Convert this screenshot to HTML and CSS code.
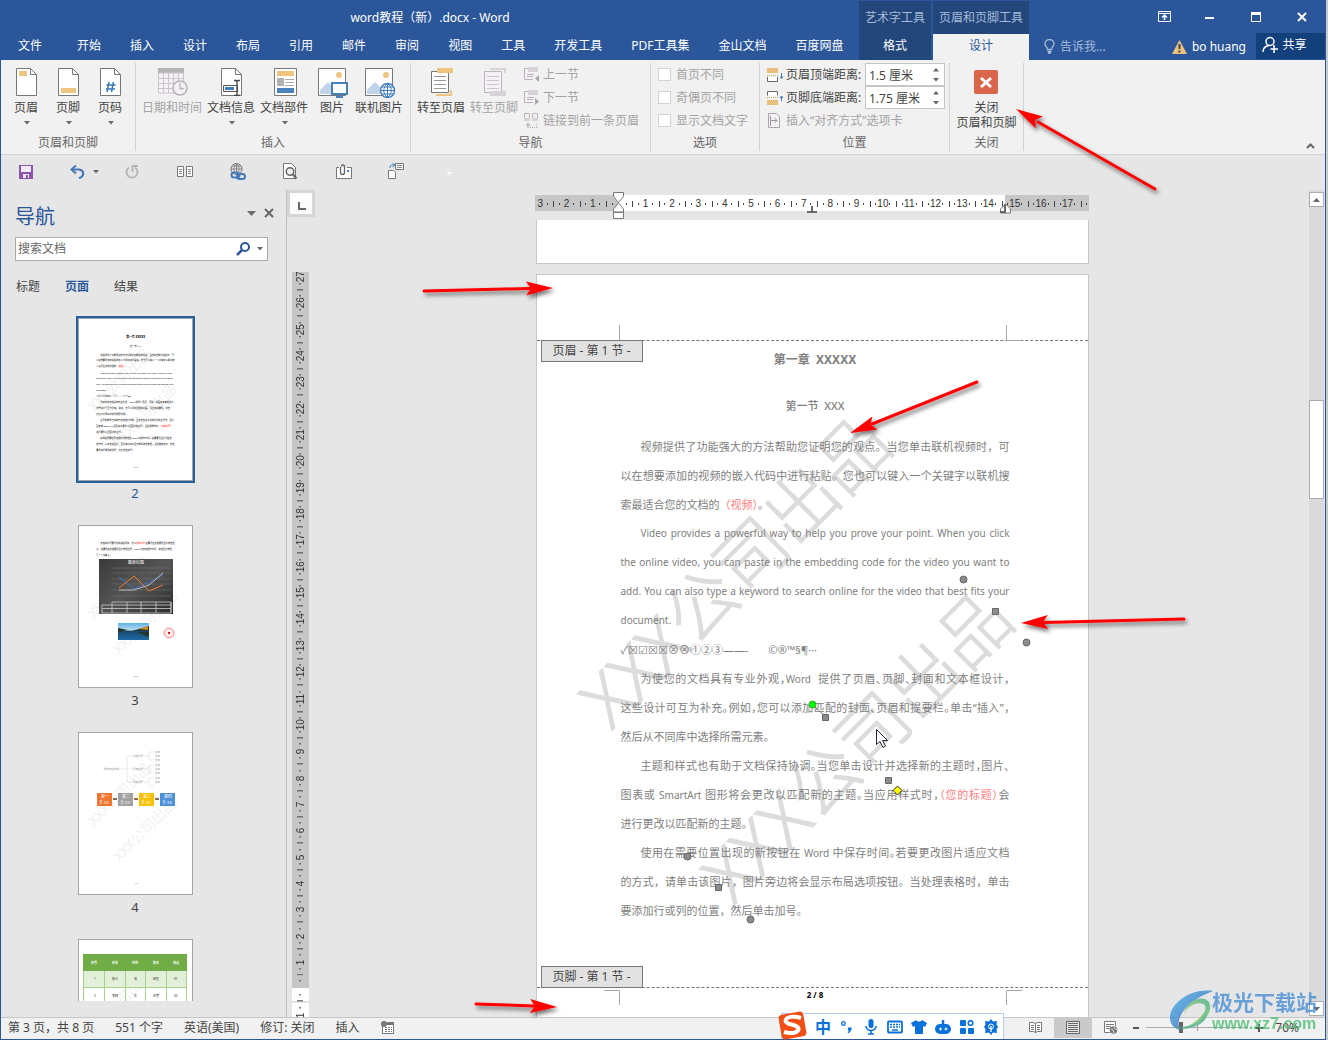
FILE: index.html
```html
<!DOCTYPE html>
<html lang="zh-CN">
<head>
<meta charset="utf-8">
<title>word教程（新）.docx - Word</title>
<link rel="stylesheet" href="styles.css">
</head>
<body>
<svg class="defs" width="0" height="0" aria-hidden="true">
  <defs>
    <symbol id="caret" viewBox="0 0 6 4"><path d="M0 0h6L3 3.500z" fill="#6a6a6a"/></symbol>
    <g id="arrowhead"><path d="M0 0L-27 -7L-22 0L-27 7z" fill="#f00"/></g>
    <linearGradient id="swirl" x1="0" y1="0" x2="1" y2="1"><stop offset="0" stop-color="#49b6ee"/><stop offset=".6" stop-color="#3a7cc6"/><stop offset="1" stop-color="#2f6bb8"/></linearGradient>
    <linearGradient id="leaf" x1="1" y1="0" x2="0" y2="1"><stop offset="0" stop-color="#45b08c"/><stop offset="1" stop-color="#b4d84a"/></linearGradient>
    <linearGradient id="dark" x1="0" y1="0" x2="1" y2="1"><stop offset="0" stop-color="#3a3a3a"/><stop offset=".5" stop-color="#555"/><stop offset="1" stop-color="#2c2c2c"/></linearGradient>
    <linearGradient id="lake" x1="0" y1="0" x2="0" y2="1"><stop offset="0" stop-color="#5bb2e8"/><stop offset=".4" stop-color="#bcd9ea"/><stop offset=".5" stop-color="#1c4a6e"/><stop offset="1" stop-color="#1a6aa8"/></linearGradient>
    <filter id="shadow" x="-20%" y="-50%" width="150%" height="220%"><feDropShadow dx="2" dy="3" stdDeviation="2" flood-color="#000" flood-opacity=".55"/></filter>
    <g id="thumb-mark" class="thumb-mark"><text transform="translate(197 295) rotate(-45)">XXX公司出品</text><text transform="translate(319 470) rotate(-45)">XXX公司出品</text></g>
  </defs>
</svg>

<div class="app">
  <header class="titlebar">
    <div class="title-main">
      <div class="doc-title">word教程（新）.docx - Word</div>
      <nav class="tabs">
        <button class="tab tab-file">文件</button><button class="tab">开始</button><button class="tab">插入</button><button class="tab">设计</button><button class="tab">布局</button><button class="tab">引用</button><button class="tab">邮件</button><button class="tab">审阅</button><button class="tab">视图</button><button class="tab">工具</button><button class="tab">开发工具</button><button class="tab">PDF工具集</button><button class="tab">金山文档</button><button class="tab">百度网盘</button>
      </nav>
    </div>
    <div class="context context-art"><div class="context-name">艺术字工具</div><button class="tab">格式</button></div>
    <div class="context context-hf"><div class="context-name">页眉和页脚工具</div><button class="tab tab-active">设计</button></div>
    <div class="title-side">
      <div class="window-buttons">
        <button aria-label="功能区显示选项"><svg width="13" height="11"><path d="M.5 .5h12v10H.5zM.5 2.500h12" fill="none" stroke="#fff"/><path d="M6.500 9V5M4 6.500L6.500 4L9 6.500" fill="none" stroke="#fff" stroke-width="1.500"/></svg></button>
        <button aria-label="最小化"><svg width="10" height="11"><path d="M0 6h9v2H0z" fill="#fff"/></svg></button>
        <button aria-label="最大化"><svg width="10" height="10"><path d="M.5 1.500h9v8h-9z" fill="none" stroke="#fff"/><path d="M0 0h10v3H0z" fill="#fff"/></svg></button>
        <button aria-label="关闭"><svg width="10" height="10"><path d="M1 1l8 8M9 1L1 9" stroke="#fff" stroke-width="2"/></svg></button>
      </div>
      <div class="account-row">
        <button class="tell-me"><svg width="11" height="15"><path d="M3.500 10.500C3.500 8 1 7.500 1 4.800a4.500 4.300 0 0 1 9 0C10 7.500 7.500 8 7.500 10.500zM3.500 12.500h4M4 14h3" fill="none" stroke="#a5bad9" stroke-width="1.300"/></svg><span>告诉我...</span></button>
        <button class="user"><svg width="15" height="14"><path d="M7.500 0L15 14H0z" fill="#eac282"/><path d="M6.500 4h2v5h-2zM6.500 10.500h2v2h-2z" fill="#444"/></svg><span>bo huang</span></button>
        <button class="share"><svg width="16" height="17"><circle cx="8" cy="5.500" r="4" fill="none" stroke="#fff" stroke-width="1.500"/><path d="M1 16c0-4 3-6 6-6.500M12 9v8M8.500 13H16" fill="none" stroke="#fff" stroke-width="1.500"/></svg><span>共享</span></button>
      </div>
    </div>
  </header>

  <section class="ribbon">
    <div class="group g-hf">
      <div class="group-body">
        <button class="big w42"><svg width="22" height="28"><path d="M.5 .5h14l6 6v21H.5z" fill="#fff" stroke="#777"/><path d="M14.500 .5v6h6" fill="none" stroke="#777"/><path d="M3 3h8v5H3z" fill="#edc57f"/></svg><span>页眉</span><svg class="caret"><use href="#caret"/></svg></button>
        <button class="big w42"><svg width="22" height="28"><path d="M.5 .5h14l6 6v21H.5z" fill="#fff" stroke="#777"/><path d="M14.500 .5v6h6" fill="none" stroke="#777"/><path d="M3 20h15v5H3z" fill="#edc57f"/></svg><span>页脚</span><svg class="caret"><use href="#caret"/></svg></button>
        <button class="big w42"><svg width="22" height="28"><path d="M.5 .5h14l6 6v21H.5z" fill="#fff" stroke="#777"/><path d="M14.500 .5v6h6" fill="none" stroke="#777"/><path d="M9 14l-2 10M13.500 14l-2 10M6.500 17h9M6 21h9" stroke="#3a78b8" stroke-width="1.500"/></svg><span>页码</span><svg class="caret"><use href="#caret"/></svg></button>
      </div>
      <div class="group-name">页眉和页脚</div>
    </div>
    <div class="group g-insert">
      <div class="group-body">
        <button class="big w60 off" disabled><svg width="30" height="28"><path d="M0 0h26v5H0z" fill="#b5b2b5"/><path d="M.5 5h25v20H.5z" fill="#f6f1f6" stroke="#cbc4cb"/><path d="M5.500 5v20M10.500 5v20M15.500 5v20M20.500 5v20M0 10.500h26M0 15.500h26M0 20.500h26" stroke="#cbc4cb"/><circle cx="22" cy="20" r="7" fill="#f6f1f6" stroke="#b5b2b5" stroke-width="1.500"/><path d="M22 15v5.500h4" fill="none" stroke="#b5b2b5" stroke-width="1.300"/></svg><span>日期和时间</span></button>
        <button class="big w58"><svg width="22" height="28"><path d="M.5 .5h14l6 6v21H.5z" fill="#fff" stroke="#777"/><path d="M14.500 .5v6h6" fill="none" stroke="#777"/><path d="M2.500 17.500h14v6h-14z" fill="#fff" stroke="#555"/><path d="M4 19h9v3H4z" fill="#3f7cbb"/><path d="M13 12.500h2l1 1 1-1h2M13 27.500h2l1-1 1 1h2M16 13v14" fill="none" stroke="#444" stroke-width="1.300"/></svg><span>文档信息</span><svg class="caret"><use href="#caret"/></svg></button>
        <button class="big w48"><svg width="23" height="28"><path d="M.5 .5h22v27H.5z" fill="#fff" stroke="#777"/><path d="M3 3h17v5H3z" fill="#edc57f"/><path d="M3 10h7v8H3z" fill="#b0b0b0"/><path d="M11 11.500h9M11 14.500h9M11 17.500h9" stroke="#aaa"/><path d="M3 20h17v5H3z" fill="#4a82bd"/></svg><span>文档部件</span><svg class="caret"><use href="#caret"/></svg></button>
        <button class="big w48"><svg width="30" height="30"><path d="M.5 .5h27v27H.5z" fill="#fff" stroke="#777"/><circle cx="21" cy="7" r="3" fill="#edc57f"/><path d="M2 26V22L10 14l8 8v4z" fill="#c0d3e9"/><path d="M14 15h15v11H14z" fill="#fff" stroke="#4a80b8" stroke-width="2"/><path d="M18 29h7M21.500 27v2" stroke="#4a80b8" stroke-width="2"/></svg><span>图片</span></button>
        <button class="big w46"><svg width="30" height="30"><path d="M.5 .5h27v27H.5z" fill="#fff" stroke="#777"/><circle cx="21" cy="7" r="3" fill="#edc57f"/><path d="M2 26V22L10 14l8 8v4z" fill="#c0d3e9"/><circle cx="22.500" cy="22.500" r="7" fill="#fff" stroke="#3f7cbb" stroke-width="1.400"/><path d="M22.500 15.500v14M15.500 22.500h14M16.500 19h12M16.500 26h12M22.500 15.500c-5 4-5 10 0 14M22.500 15.500c5 4 5 10 0 14" fill="none" stroke="#3f7cbb"/></svg><span>联机图片</span></button>
      </div>
      <div class="group-name">插入</div>
    </div>
    <div class="group g-nav">
      <div class="group-body">
        <button class="big w52"><svg width="22" height="28"><path d="M.5 3.500h17v21H.5z" fill="#fff" stroke="#777"/><path d="M6 0h16v5H6z" fill="#edc57f"/><path d="M3 8.500h12M3 12.500h12M3 16.500h12M3 20.500h12" stroke="#999"/><path d="M20 22v5H5" fill="none" stroke="#edc57f" stroke-width="2"/></svg><span>转至页眉</span></button>
        <button class="big w54 off" disabled><svg width="22" height="28"><path d="M.5 3.500h17v21H.5z" fill="#f6f1f6" stroke="#bbb4bb"/><path d="M6 1h15v4" fill="none" stroke="#d8d2d8" stroke-width="2"/><path d="M3 8.500h12M3 12.500h12M3 16.500h12M3 20.500h12" stroke="#cbc4cb"/><path d="M6 23h16v5H6z" fill="#d8d2d8"/></svg><span>转至页脚</span></button>
        <div class="rows">
          <button class="row off" disabled><svg width="16" height="16"><path d="M4 1.500H.5v11H9" fill="#f6f1f6" stroke="#b8b2b8"/><path d="M4 0h10v5H4z" fill="#d8d2d8"/><path d="M3 7.500h7M3 9.500h6" stroke="#b8b2b8"/><path d="M15 8v7l-4-3.500z" fill="#aaa5aa"/></svg><span>上一节</span></button>
          <button class="row off" disabled><svg width="16" height="16"><path d="M4 1.500H.5v11H9" fill="#f6f1f6" stroke="#b8b2b8"/><path d="M4 0h10v5H4z" fill="#d8d2d8"/><path d="M3 7.500h7M3 9.500h6" stroke="#b8b2b8"/><path d="M11 8v7l4-3.500z" fill="#aaa5aa"/></svg><span>下一节</span></button>
          <button class="row off" disabled><svg width="16" height="16"><path d="M.5 5V.5h5V5M8.500 5V.5h5V5" fill="none" stroke="#b8b2b8"/><path d="M0 5h6v3H0zM8 5h6v3H8z" fill="#d8d2d8"/><path d="M4 15v-4M2 12.500l2-2 2 2" fill="none" stroke="#999"/><path d="M6 14.500h7V10" fill="none" stroke="#aaa" stroke-dasharray="1 1"/></svg><span>链接到前一条页眉</span></button>
        </div>
      </div>
      <div class="group-name">导航</div>
    </div>
    <div class="group g-options">
      <div class="group-body rows">
        <label class="check"><input type="checkbox" disabled><span>首页不同</span></label>
        <label class="check"><input type="checkbox" disabled><span>奇偶页不同</span></label>
        <label class="check"><input type="checkbox" disabled><span>显示文档文字</span></label>
      </div>
      <div class="group-name">选项</div>
    </div>
    <div class="group g-position">
      <div class="group-body rows">
        <div class="measure"><svg width="17" height="14"><path d="M0 0h11v5H0z" fill="#e8c07c"/><path d="M0 7.500h11" stroke="#d0a860" stroke-dasharray="1 1"/><path d="M.5 9v4.500h10V9" fill="#fff" stroke="#666"/><path d="M14.500 5v5M13 8.500l1.500 2 1.500-2" fill="none" stroke="#3f7cbb"/></svg><label for="top-distance">页眉顶端距离:</label><span class="spin"><input id="top-distance" type="text" value="1.5 厘米"><svg width="6" height="14"><path d="M0 3.500h6L3 0zM0 10h6l-3 3.500z" fill="#666"/></svg></span></div>
        <div class="measure"><svg width="17" height="14"><path d="M.5 4.500V.5h10v4" fill="#fff" stroke="#666"/><path d="M0 6.500h11" stroke="#d0a860" stroke-dasharray="1 1"/><path d="M0 9h11v5H0z" fill="#e8c07c"/><path d="M14.500 10V5M13 7l1.500-2L16 7" fill="none" stroke="#3f7cbb"/></svg><label for="bottom-distance">页脚底端距离:</label><span class="spin"><input id="bottom-distance" type="text" value="1.75 厘米"><svg width="6" height="14"><path d="M0 3.500h6L3 0zM0 10h6l-3 3.500z" fill="#666"/></svg></span></div>
        <button class="row off" disabled><svg width="16" height="15"><path d="M1.500 .5h8l3 3v11h-11z" fill="#f6f1f6" stroke="#aaa5aa"/><path d="M3.500 3v10M4 7.500h6M7.500 5L10 7.500 7.500 10" fill="none" stroke="#999"/></svg><span>插入“对齐方式”选项卡</span></button>
      </div>
      <div class="group-name">位置</div>
    </div>
    <div class="group g-close">
      <div class="group-body">
        <button class="big close-hf"><svg width="24" height="24"><rect width="24" height="24" rx="2" fill="#d9654a"/><path d="M7 8l10 9M17 8L7 17" stroke="#fff" stroke-width="3"/></svg><span>关闭<br>页眉和页脚</span></button>
      </div>
      <div class="group-name">关闭</div>
    </div>
    <button class="collapse" aria-label="折叠功能区"><svg width="9" height="6"><path d="M1 5l3.500-3.500L8 5" fill="none" stroke="#666" stroke-width="2"/></svg></button>
  </section>

  <div class="quick">
    <button aria-label="保存"><svg width="14" height="14"><path d="M0 0h14v14H0z" fill="#8a56ab"/><path d="M2 1h10v6H2zM4 9h6v4H4z" fill="#f2eaf7"/><path d="M7 10h2v3H7z" fill="#8a56ab"/></svg></button>
    <button class="undo" aria-label="撤消"><svg width="15" height="14"><path d="M2 4.500h7c6 1 5 7.500 0 8.500" fill="none" stroke="#4379b8" stroke-width="2.200"/><path d="M6 .5L1.500 4.500 6 8.500" fill="none" stroke="#4379b8" stroke-width="2"/></svg><svg class="caret"><use href="#caret"/></svg></button>
    <button aria-label="恢复"><svg width="14" height="14"><path d="M4 2.500a5.500 5.500 0 1 0 6 0M7.500 7V1H13" fill="none" stroke="#b3b3b3" stroke-width="1.800"/></svg></button>
    <button aria-label="阅读视图"><svg width="16" height="12"><path d="M.5 .5h6v10h-6zM9.500 .5h6v10h-6z" fill="#fff" stroke="#777"/><path d="M2 3.500h3M2 5.500h3M2 7.500h3M11 3.500h3M11 5.500h3M11 7.500h3" stroke="#888"/></svg></button>
    <button aria-label="超链接"><svg width="16" height="17"><circle cx="6.500" cy="6" r="5.500" fill="none" stroke="#777"/><path d="M1 6h11M6.500 .5v11M2 3h9M6.500 .5c-3.500 3-3.500 8 0 11M6.500 .5c3.500 3 3.500 8 0 11" fill="none" stroke="#888"/><rect x="1.500" y="9.500" width="8" height="5" rx="2.500" fill="none" stroke="#4379b8" stroke-width="2"/><rect x="7" y="11" width="8" height="5" rx="2.500" fill="none" stroke="#4379b8" stroke-width="2"/></svg></button>
    <button aria-label="打印预览"><svg width="15" height="17"><path d="M.5 .5h8l4 4v11H.5z" fill="#fff" stroke="#777"/><circle cx="7" cy="8.500" r="3.800" fill="#eee" stroke="#666" stroke-width="1.500"/><path d="M9.500 11l4 4.500" stroke="#666" stroke-width="2.200"/></svg></button>
    <button aria-label="附件"><svg width="16" height="15"><path d="M3 3.500H.5v11h15v-11H11" fill="#fff" stroke="#777"/><path d="M4.500 3v5.500a2 2 0 0 0 4 0V2.500a1.500 1.500 0 0 0-3 0" fill="none" stroke="#666" stroke-width="1.300"/><path d="M11 6h2v2h-2z" fill="#4379b8"/></svg></button>
    <button aria-label="切换窗口"><svg width="17" height="17"><path d="M.5 7.500h5l2 2v6h-7zM7.500 .5h8v6h-8z" fill="#fff" stroke="#777"/><path d="M9 2.500h5M9 4.500h5" stroke="#888"/><path d="M2 5c0-3 1-3 4-3M4.500 0L7 2 4.500 4" fill="none" stroke="#4379b8"/></svg></button>
    <button aria-label="自定义快速访问工具栏"><svg width="5" height="6"><path d="M0 .5h5M0 3h5L2.500 6z" fill="#fafafa" stroke="#fafafa" stroke-width=".5"/></svg></button>
  </div>

  <main class="workspace">
    <aside class="nav-pane">
      <div class="nav-head"><h2>导航</h2><button aria-label="任务窗格选项"><svg width="9" height="5"><path d="M0 0h9L4.500 5z" fill="#6a6a6a"/></svg></button><button aria-label="关闭"><svg width="10" height="10"><path d="M1 1l8 8M9 1L1 9" stroke="#666" stroke-width="2"/></svg></button></div>
      <div class="search"><input type="text" placeholder="搜索文档" aria-label="搜索文档"><svg width="15" height="14"><circle cx="9" cy="5" r="4" fill="none" stroke="#2b579a" stroke-width="2"/><path d="M6 8L1 13" stroke="#2b579a" stroke-width="2.500"/></svg><svg class="caret"><use href="#caret"/></svg></div>
      <div class="nav-tabs"><button>标题</button><button class="on">页面</button><button>结果</button></div>
      <div class="thumbs">
        <button class="thumb selected">
          <svg viewBox="0 0 553 788">
            <use href="#thumb-mark"/>
            <g class="thumb-text">
              <text x="277" y="94" text-anchor="middle" font-size="14" font-weight="700">第一章 XXXXX</text><text x="277" y="136" text-anchor="middle">第一节 XXX</text>
              <text x="104" y="179">视频提供了功能强大的方法帮助您证明您的观点。当您单击联机视频时，可</text><text x="84" y="208">以在想要添加的视频的嵌入代码中进行粘贴。您也可以键入一个关键字以联机搜</text><text x="84" y="237">索最适合您的文档的<tspan fill="red">（视频）</tspan>。</text>
              <g font-size="10"><text x="104" y="267">Video provides a powerful way to help you prove your point. When you click</text><text x="84" y="296">the online video, you can paste in the embedding code for the video you want to</text><text x="84" y="325">add. You can also type a keyword to search online for the video that best fits your</text><text x="84" y="354">document.</text></g>
              <text x="84" y="383">✓☒☑☒☒⊗⊗①②③——- ©®™§¶···</text><text x="104" y="412">为使您的文档具有专业外观，Word 提供了页眉、页脚、封面和文本框设计，</text><text x="84" y="441">这些设计可互为补充。例如，您可以添加匹配的封面、页眉和提要栏。单击</text><text x="84" y="470">然后从不同库中选择所需元素。</text><text x="104" y="499">主题和样式也有助于文档保持协调。当您单击设计并选择新的主题时，图片</text><text x="84" y="528">图表或 SmartArt 图形将会更改以匹配新的主题。当应用样式时，<tspan fill="red">（您的标题）</tspan></text><text x="84" y="557">进行更改以匹配新的主题。</text><text x="104" y="586">使用在需要位置出现的新按钮在 Word 中保存时间。若要更改图片适应文</text><text x="84" y="615">的方式，请单击该图片，图片旁边将会显示布局选项按钮。当处理表格时，单击</text><text x="84" y="644">要添加行或列的位置，然后单击加号。</text><text x="277" y="730" text-anchor="middle" font-size="9">2 / 8</text>
            </g>
          </svg>
        </button>
        <div class="thumb-no on">2</div>
        <button class="thumb">
          <svg viewBox="0 0 113 161">
            <g transform="scale(.2045)"><use href="#thumb-mark"/><g class="thumb-text"><text x="104" y="88">文档的标题更改您的视频添加，您以<tspan fill="red">您的标题</tspan> 若要适应文档更改图片按钮位</text><text x="84" y="117">只，若要适应文档更改图片按钮位置，Word 会自动保存时间，单击图片按钮</text><text x="84" y="147">另一个设备上。</text><text x="277" y="736" text-anchor="middle" font-size="9">3 / 8</text></g></g>
            <path d="M20 33h74v55H20z" fill="url(#dark)"/>
            <text x="57" y="38" text-anchor="middle" fill="#fff" font-size="4">图表标题</text>
            <path d="M33 42h59M33 47h59M33 53h59M33 58h59M33 64h59M33 70h59" stroke="#777" stroke-width=".5"/>
            <path d="M40 51l15 12 15-7 14-7" fill="none" stroke="#4472c4"/><path d="M40 62l15-12 15 15 14-6" fill="none" stroke="#ed7d31"/><path d="M40 64h15l15-5 14-12" fill="none" stroke="#bbb"/>
            <path d="M33 76h59v11H23v-8h69M23 82.500h69M33 76v11M48 76v11M62 76v11M77 76v11M92 76v11" fill="none" stroke="#ccc" stroke-width=".8"/>
            <path d="M39 97h31v17H39z" fill="url(#lake)"/><path d="M39 102l10 2-10 2zM70 100l-17 5h17zM58 106h12v5z" fill="#23342c"/><path d="M60 103l9-3v4z" fill="#d08a20"/>
            <circle cx="90" cy="107" r="5" fill="none" stroke="#f66" stroke-width=".8"/><circle cx="90" cy="107" r="3.500" fill="none" stroke="#faa" stroke-width=".6"/><circle cx="90" cy="107" r="1.200" fill="red"/>
          </svg>
        </button>
        <div class="thumb-no">3</div>
        <button class="thumb">
          <svg viewBox="0 0 113 161">
            <g transform="scale(.2045)"><use href="#thumb-mark"/></g>
            <g fill="none" stroke="#d4d4de" stroke-width=".5"><path d="M24 36h18M42 36h6M48 23v26M48 23h6M48 36h6M48 49h6M64 23h6M64 36h6M64 49h6M70 19v8M70 32v8M70 45v8M70 19h5M70 27h5M70 32h5M70 40h5M70 45h5M70 53h5"/></g>
            <g fill="#999" font-size="2.500"><text x="25" y="37">提升专业外观</text><text x="54" y="24">添加标题</text><text x="54" y="37">添加标题</text><text x="54" y="50">添加标题</text><text x="76" y="20">文本</text><text x="76" y="24">文本</text><text x="76" y="28">文本</text><text x="76" y="33">文本</text><text x="76" y="37">文本</text><text x="76" y="41">文本</text><text x="76" y="46">文本</text><text x="76" y="50">文本</text></g>
            <path d="M18 60h15v13H18z" fill="#ee7530"/><path d="M39 60h15v13H39z" fill="#a0a0a0"/><path d="M60 60h15v13H60z" fill="#f8c002"/><path d="M81 60h15v13H81z" fill="#4a90d6"/>
            <path d="M34 66h4M55 66h4M76 66h4" stroke="#8a6a50" stroke-width="2"/>
            <g fill="#fff" font-size="4"><text x="22" y="65">第一</text><text x="20" y="71">步 XX</text><text x="43" y="65">第二</text><text x="41" y="71">步 XX</text><text x="64" y="65">第三</text><text x="62" y="71">步 XX</text><text x="85" y="65">第四</text><text x="83" y="71">步 XX</text></g>
            <text x="57" y="151" text-anchor="middle" font-size="2" fill="#555">4 / 8</text>
          </svg>
        </button>
        <div class="thumb-no">4</div>
        <button class="thumb">
          <svg viewBox="0 0 113 161">
            <g transform="scale(.2045)"><use href="#thumb-mark"/></g>
            <path d="M4 14h104v17H4z" fill="#70ad47"/><path d="M4 31h104v16H4z" fill="#e2efd9"/>
            <path d="M4.500 31v52M25.500 31v52M46.500 31v52M66.500 31v52M87.500 31v52M107.500 31v52M4 47.500h104M4 64h104" fill="none" stroke="#a8d08d"/>
            <g fill="#fff" font-size="3" font-weight="700"><text x="12" y="24">序号</text><text x="33" y="24">姓名</text><text x="53" y="24">性别</text><text x="74" y="24">职位</text><text x="94" y="24">电话</text></g>
            <g fill="#222" font-size="3"><text x="15" y="40">1</text><text x="33" y="40">张三</text><text x="55" y="40">男</text><text x="74" y="40">经理</text><text x="95" y="40">01</text><text x="15" y="57">2</text><text x="33" y="57">李四</text><text x="55" y="57">女</text><text x="74" y="57">主管</text><text x="95" y="57">02</text></g>
          </svg>
        </button>
      </div>
    </aside>

    <section class="doc-area">
      <div class="v-column">
        <button class="tab-stop" aria-label="制表符"><svg width="8" height="8"><path d="M1 0v7h7" fill="none" stroke="#666" stroke-width="2"/></svg></button>
        <div class="v-ruler"><ol>
          <li>27</li><li>26</li><li>25</li><li>24</li><li>23</li><li>22</li><li>21</li><li>20</li><li>19</li><li>18</li><li>17</li><li>16</li><li>15</li><li>14</li><li>13</li><li>12</li><li>11</li><li>10</li><li>9</li><li>8</li><li>7</li><li>6</li><li>5</li><li>4</li><li>3</li><li>2</li><li>1</li><li class="zero"></li><li class="below">1</li>
        </ol></div>
      </div>

      <div class="canvas">
        <div class="h-ruler-wrap">
          <div class="h-ruler"><ol>
            <li>3</li><li>2</li><li>1</li><li class="zero"></li><li>1</li><li>2</li><li>3</li><li>4</li><li>5</li><li>6</li><li>7</li><li>8</li><li>9</li><li>10</li><li>11</li><li>12</li><li>13</li><li>14</li><li>15</li><li>16</li><li>17</li><li></li>
          </ol></div>
          <svg class="markers" width="554" height="30">
            <path d="M78.500 .5h10v4l-5 6-5-6zM83.500 11l5 6v3h-10v-3zM78.500 20.500h10v6h-10z" fill="#fff" stroke="#777"/>
            <path d="M277 14v6M272 20h10" stroke="#666" stroke-width="2"/>
            <path d="M470.500 12l5 5v4h-10v-4z" fill="#fff" stroke="#777"/><path d="M470 12v8M465 20h6" stroke="#666" stroke-width="2"/>
          </svg>
        </div>
        <div class="page-previous"></div>
        <article class="page">
          <div class="header-zone"></div>
          <div class="zone-tag header-tag">页眉 - 第 1 节 -</div>
          <svg class="watermark" width="553" height="743" aria-hidden="true">
            <text transform="translate(197 295) rotate(-45)">XXX公司出品</text>
            <text transform="translate(319 470) rotate(-45)">XXX公司出品</text>
          </svg>
          <div class="text">
            <h1>第一章&nbsp; XXXXX</h1>
            <h2>第一节&nbsp; XXX</h2>
            <p><span class="first">视频提供了功能强大的方法帮助您证明您的观点。当您单击联机视频时，可</span><span>以在想要添加的视频的嵌入代码中进行粘贴。您也可以键入一个关键字以联机搜</span><span class="last">索最适合您的文档的<em>（视频）</em>。</span></p>
            <p class="latin"><span class="first">Video provides a powerful way to help you prove your point. When you click</span><span>the online video, you can paste in the embedding code for the video you want to</span><span>add. You can also type a keyword to search online for the video that best fits your</span><span class="last">document.</span></p>
            <p><span class="last symbols">✓☒☑☒☒⊗⊗①②③——-<i></i>©®™§¶···</span></p>
            <p><span class="first tight">为使您的文档具有专业外观，<b>Word</b>&nbsp; 提供了页眉、页脚、封面和文本框设计，</span><span class="tight">这些设计可互为补充。例如，您可以添加匹配的封面、页眉和提要栏。单击“插入”，</span><span class="last">然后从不同库中选择所需元素。</span></p>
            <p><span class="first tight">主题和样式也有助于文档保持协调。当您单击设计并选择新的主题时，图片、</span><span class="tight">图表或 <b>SmartArt</b> 图形将会更改以匹配新的主题。当应用样式时，<em>（您的标题）</em>会</span><span class="last">进行更改以匹配新的主题。</span></p>
            <p><span class="first tight">使用在需要位置出现的新按钮在 <b>Word</b> 中保存时间。若要更改图片适应文档</span><span>的方式，请单击该图片，图片旁边将会显示布局选项按钮。当处理表格时，单击</span><span class="last">要添加行或列的位置，然后单击加号。</span></p>
          </div>
          <div class="footer-zone">2 / 8</div>
          <div class="zone-tag footer-tag">页脚 - 第 1 节 -</div>
          <svg class="overlay" width="553" height="743" aria-hidden="true">
            <g fill="none" stroke="#a6a6a6"><path d="M82.500 50v15M469.500 50v15.500h15M67 715.500h15.500V730M485 715.500h-15.500V730"/></g>
            <path d="M276 430l13 12" stroke="#777"/>
            <g fill="#8c8c8c" stroke="#666"><circle cx="426.500" cy="304.500" r="3.500"/><circle cx="489.500" cy="367.500" r="3.500"/><circle cx="150.500" cy="581.500" r="3.500"/><circle cx="213.500" cy="644.500" r="3.500"/><path d="M455.500 333.500h6v6h-6zM285.500 439.500h6v6h-6zM348.500 502.500h6v6h-6zM178.500 609.500h6v6h-6z"/></g>
            <circle cx="275.500" cy="429.500" r="3.500" fill="#0f0" stroke="#3a3"/>
            <path d="M360.500 511l4.500 4.500-4.500 4.500-4.500-4.500z" fill="#ff0" stroke="#222"/>
            <path d="M339.500 454.500v15l3.500-3 3 6 2.500-1.500-3-5.500h5z" fill="#fff" stroke="#223"/>
          </svg>
        </article>
      </div>

      <div class="scrollbar">
        <button aria-label="向上滚动"><svg width="7" height="4"><path d="M0 4h7L3.500 0z" fill="#666"/></svg></button>
        <div class="track"><div class="scroll-thumb"></div></div>
        <button aria-label="向下滚动"><svg width="7" height="4"><path d="M0 0h7L3.500 4z" fill="#666"/></svg></button>
      </div>
    </section>
  </main>

  <footer class="status">
    <span>第 3 页，共 8 页</span><span>551 个字</span><span>英语(美国)</span><span>修订: 关闭</span><span>插入</span>
    <svg width="14" height="13"><path d="M1.500 4v8.500h11v-11H6" fill="#fff" stroke="#777"/><path d="M6 1h7v3H6z" fill="#777"/><circle cx="3" cy="3" r="3" fill="#777"/><path d="M4 6.500h7M4 8.500h7M4 10.500h7" stroke="#777" stroke-dasharray="2 1"/></svg>
    <div class="views">
      <button aria-label="阅读视图"><svg width="13" height="13"><path d="M.5 1.500h4l2 1 2-1h4v9h-4l-2 1-2-1h-4z" fill="#fff" stroke="#777"/><path d="M6.500 2v10M2 4.500h3M2 6.500h3M2 8.500h3M8 4.500h3M8 6.500h3M8 8.500h3" stroke="#777"/></svg></button>
      <button class="on" aria-label="页面视图"><svg width="14" height="13"><path d="M.5 .5h13v12H.5z" fill="#e8e8e8" stroke="#666"/><path d="M2 2.500h10M2 4.500h10M2 6.500h10M2 8.500h10M2 10.500h10" stroke="#666"/></svg></button>
      <button aria-label="Web 版式视图"><svg width="14" height="13"><path d="M6 11.500H.5V.5h11V5" fill="#fff" stroke="#777"/><path d="M2 3.500h8M2 5.500h5M2 7.500h4" stroke="#777"/><circle cx="9.500" cy="9" r="3.800" fill="#777"/><path d="M7 8l2 1 1 3M10 6l1 2 2 1" fill="none" stroke="#ddd"/></svg></button>
    </div>
    <div class="zoom"><button aria-label="缩小"><svg width="6" height="10"><path d="M0 4h6v2H0z" fill="#555"/></svg></button><input type="range" min="10" max="190" value="70" aria-label="缩放"><button aria-label="放大"><svg width="8" height="10"><path d="M0 5h8M4 1v8" stroke="#555" stroke-width="2"/></svg></button><span>70%</span></div>
  </footer>

  <div class="ime">
    <svg class="sogou" width="31" height="30"><rect x="3" y="3" width="25" height="25" rx="4" fill="#f04e14" transform="rotate(-10 15.500 15.500)"/><path d="M24 8C18 6 9 6 8.500 11c0 4 12 3 13 7.500C22 23 14 24 7 22" fill="none" stroke="#fff" stroke-width="4"/></svg>
    <b>中</b>
    <svg width="14" height="16"><circle cx="3.500" cy="4.500" r="1.800" fill="none" stroke="#0a70da" stroke-width="1.300"/><path d="M8 8.500h3.500V11L9 14H7.500L9 11.500H8z" fill="#0a70da"/></svg>
    <svg width="14" height="16"><rect x="4.500" y="0" width="5" height="9" rx="2.500" fill="#0a70da"/><path d="M2 7c0 6 10 6 10 0M7 12v3M4 15h6" fill="none" stroke="#0a70da" stroke-width="1.600"/></svg>
    <svg width="16" height="14"><rect x="1" y="1.500" width="14" height="11" rx="1" fill="none" stroke="#0a70da" stroke-width="1.800"/><path d="M3 4.500h10M3 7h10" stroke="#0a70da" stroke-width="1.500" stroke-dasharray="2 1"/><path d="M5 10h6" stroke="#0a70da" stroke-width="1.500"/></svg>
    <svg width="16" height="14"><path d="M5 0c1 2 5 2 6 0l5 3-2 4-2-1v8H4V6L2 7 0 3z" fill="#0a70da"/></svg>
    <svg width="16" height="14"><rect x="0" y="4" width="16" height="10" rx="5" fill="#0a70da"/><path d="M8 0v5" stroke="#0a70da" stroke-width="2.500"/><path d="M4 9h3M5.500 7.500v3M9.500 9h3M11 7.500v3" stroke="#fff"/></svg>
    <svg width="14" height="14"><rect width="6" height="6" rx="1" fill="#0a70da"/><circle cx="10.500" cy="3" r="2.300" fill="none" stroke="#0a70da" stroke-width="1.600"/><rect y="8" width="6" height="6" rx="1" fill="#0a70da"/><rect x="8" y="8" width="6" height="6" rx="1" fill="#0a70da"/></svg>
    <svg width="14" height="16"><path d="M7 0l2 2.500 4-.5-.5 3.500L14 8l-1.500 2.500L13 14l-4-.5L7 16l-2-2.500L1 14l.5-3.500L0 8l1.500-2.500L1 2l4 .5z" fill="#0a70da"/><circle cx="7" cy="7.500" r="2.500" fill="none" stroke="#fff"/><path d="M7 7v6" stroke="#fff" stroke-width="1.300"/></svg>
  </div>

  <svg class="annotations" width="1328" height="1040" aria-hidden="true">
    <g filter="url(#shadow)"><path d="M1038 122L1155 189" class="stem"/><use href="#arrowhead" transform="translate(1016 109) rotate(210)"/></g>
    <g filter="url(#shadow)"><path d="M424 291L530 288.500" class="stem"/><use href="#arrowhead" transform="translate(553 288) rotate(-1)"/></g>
    <g filter="url(#shadow)"><path d="M872 424L977 382" class="stem"/><use href="#arrowhead" transform="translate(850 433) rotate(158)"/></g>
    <g filter="url(#shadow)"><path d="M1044 622.500L1184 619" class="stem"/><use href="#arrowhead" transform="translate(1021 623) rotate(178)"/></g>
    <g filter="url(#shadow)"><path d="M476 1004L534 1006" class="stem"/><use href="#arrowhead" transform="translate(557 1007) rotate(2)"/></g>
    <g opacity=".8">
      <path d="M1213 991c-22-3-43 12-43 27 0 7 5 11 10 12-5-11 4-28 33-39z" fill="url(#swirl)"/>
      <path d="M1184 1015c2-8 12-14 19-11 7 4-1 15-20 25 22-3 32-20 25-28-8-7-23 2-24 14z" fill="url(#leaf)"/>
      <path d="M1172 1027c14 2 28-4 35-14 1 9-15 20-35 14z" fill="#4fb08c"/>
      <text class="brand-cn" x="1212" y="1010">极光下载站</text><text class="brand-url" x="1212" y="1029">www.xz7.com</text>
    </g>
  </svg>
</div>
</body>
</html>
```
FILE: styles.css
```css
* { box-sizing: border-box; }
html, body { height: 100%; }
body {
  margin: 0;
  background: #c9c9cc;
  color: #444;
  font: 12px/16px "Noto Sans", "Noto Sans CJK SC", sans-serif;
  overflow: hidden;
}
button {
  display: flex;
  align-items: center;
  justify-content: center;
  margin: 0;
  padding: 0;
  border: 0;
  background: none;
  color: inherit;
  font: inherit;
  white-space: nowrap;
}
svg { display: block; flex: none; }
ol { margin: 0; padding: 0; list-style: none; }
.defs { position: absolute; }
.caret { width: 6px; height: 4px; }

.app {
  position: relative;
  display: flex;
  flex-direction: column;
  height: 100vh;
  margin-right: 2px;
  border: 1px solid #2b579a;
  border-top: 0;
  background: #e6e6e6;
}

/* title bar */
.titlebar { display: flex; height: 60px; background: #2b579a; color: #fff; }
.title-main { width: 858px; display: flex; flex-direction: column; }
.doc-title { height: 34px; line-height: 36px; text-align: center; }
.tabs { display: flex; gap: 29px; height: 26px; padding-left: 17px; }
.tab { height: 26px; padding-bottom: 2px; }
.tab-file { margin-right: 6px; }
.context { margin-top: 1px; background: #24477b; }
.context-art { width: 72px; margin-right: 2px; }
.context-hf { width: 96px; }
.context-name { height: 33px; line-height: 33px; text-align: center; color: #a5bad9; white-space: nowrap; }
.context .tab { width: 100%; }
.tab-active { background: #f1f1f1; color: #2b579a; }
.title-side { flex: 1; display: flex; flex-direction: column; }
.window-buttons { display: flex; justify-content: flex-end; height: 33px; }
.window-buttons button { width: 46px; }
.account-row { display: flex; height: 27px; padding-left: 15px; }
.tell-me { gap: 5px; margin-right: auto; color: #a5bad9; }
.user { gap: 5px; margin-right: 10px; }
.share { gap: 4px; width: 69px; height: 26px; padding-right: 12px; padding-bottom: 3px; justify-content: center; background: #12407a; }

/* ribbon */
.ribbon { display: flex; height: 95px; padding-top: 3px; border-bottom: 1px solid #d2d2d2; background: #f1f1f1; }
.group { position: relative; display: flex; flex-direction: column; height: 88px; border-right: 1px solid #d2d2d2; }
.group-body { display: flex; height: 73px; }
.group-name { text-align: center; color: #666; }
.g-hf { width: 135px; }
.g-hf .group-body { padding-left: 4px; }
.g-insert { width: 275px; }
.g-insert .group-body { padding-left: 6px; }
.g-nav { width: 240px; }
.g-nav .group-body { padding-left: 4px; }
.g-options { width: 109px; }
.g-options .group-body { padding-left: 7px; }
.g-position { width: 190px; }
.g-position .group-body { padding-left: 7px; }
.g-close { width: 74px; }
.g-close .group-body { justify-content: center; }
.big { flex-direction: column; justify-content: flex-start; height: 72px; padding-top: 5px; }
.big > svg:first-child { margin: 0 0 4px 2px; }
.big > svg[height="30"]:first-child { margin-bottom: 2px; }
.big .caret { margin: 5px 0 0 2px; }
.w42 { width: 42px; } .w46 { width: 46px; } .w48 { width: 48px; } .w52 { width: 52px; }
.w54 { width: 54px; } .w58 { width: 58px; } .w60 { width: 60px; }
.close-hf { padding-top: 7px; line-height: 15px; }
.close-hf > svg:first-child { margin: 0 0 6px; }
.off { color: #a3a3a3; }
.rows { display: flex; flex-direction: column; }
.g-nav .rows { margin-left: 3px; }
.row { height: 23px; gap: 3px; justify-content: flex-start; }
.check { display: flex; align-items: center; gap: 5px; height: 23px; color: #a3a3a3; }
.check input { appearance: none; width: 13px; height: 13px; margin: 0; border: 1px solid #d2d2d2; background: #fff; }
.measure { display: flex; align-items: center; height: 23px; }
.measure label { width: 79px; padding-left: 2px; white-space: nowrap; }
.spin { display: flex; align-items: center; width: 80px; height: 23px; margin-left: 2px; padding-right: 5px; border: 1px solid #c6c6c6; background: #fff; }
.spin input { flex: 1; min-width: 0; height: 18px; padding: 0 0 0 3px; border: 0; background: none; color: #444; font: inherit; }
.collapse { margin: 80px 10px 0 auto; height: 6px; }

/* quick access */
.quick { display: flex; align-items: center; height: 35px; }
.quick button { width: 53px; height: 35px; padding: 0 4px 2px 0; }
.quick .undo { gap: 8px; padding-left: 11px; }

/* workspace */
.workspace { flex: 1; display: flex; min-height: 0; }
.nav-pane { display: flex; flex-direction: column; width: 286px; padding: 13px 18px 16px 14px; border-right: 1px solid #bdbdbd; }
.nav-head { display: flex; align-items: flex-start; gap: 8px; height: 34px; }
.nav-head h2 { flex: 1; margin: 0; font-size: 20px; line-height: 28px; font-weight: 400; color: #2b579a; }
.nav-head button { height: 20px; }
.nav-head button:last-child { margin-right: -6px; }
.search { display: flex; align-items: center; gap: 6px; height: 24px; padding-right: 4px; border: 1px solid #ababab; background: #fff; }
.search input { flex: 1; min-width: 0; padding: 0 2px; border: 0; background: none; font: inherit; }
.search input::placeholder { color: #666; }
.nav-tabs { display: flex; gap: 25px; margin-top: 18px; padding-left: 1px; }
.nav-tabs .on { color: #2b579a; font-weight: 700; }
.thumbs { flex: 1; min-height: 0; margin-top: 21px; overflow: hidden; display: flex; flex-direction: column; align-items: center; padding-right: 13px; }
.thumb { flex: none; border: 2px solid transparent; }
.thumb svg { width: 115px; height: 163px; border: 1px solid #9da5ae; background: #fff; }
.thumb.selected { border-color: #2b6199; }
.thumb-no { flex: none; height: 40px; padding-top: 1px; font-size: 13px; line-height: 18px; }
.thumb-no.on { color: #2b579a; }
.thumb-text { font-size: 11px; fill: #000; }
.thumb-mark { font-size: 71px; font-weight: 300; fill: #ececec; }
.thumb-mark text, .watermark text { text-anchor: middle; dominant-baseline: central; }

/* document */
.doc-area { flex: 1; display: flex; min-width: 0; }
.v-column { display: flex; flex-direction: column; width: 28px; }
.tab-stop { width: 28px; height: 27px; border: 3px solid #d6d6d6; background: #fcfcfc; padding: 4px 0 0 2px; }
.v-ruler { flex: 1; min-height: 0; width: 17px; margin: 55px 0 0 5px; overflow: hidden; background: #c6c6c6; }
.v-ruler ol { display: grid; grid-auto-rows: 1fr; height: calc(100% + 19px); margin-top: -8px; }
.v-ruler li, .h-ruler li { display: flex; align-items: center; justify-content: center; font: 10px/10px "Liberation Sans", sans-serif; color: #333; }
.v-ruler li {
  writing-mode: vertical-rl;
  transform: rotate(180deg);
  background:
    linear-gradient(#444, #444) 50% 0 / 6px 1px no-repeat,
    linear-gradient(#444, #444) 50% 22% / 2px 1px no-repeat,
    linear-gradient(#444, #444) 50% 78% / 2px 1px no-repeat;
}
.v-ruler .below { background-color: #fff; }
.v-ruler .zero {
  background:
    linear-gradient(#444, #444) 50% 0 / 6px 1px no-repeat,
    linear-gradient(#444, #444) 50% 22% / 2px 1px no-repeat,
    linear-gradient(#444, #444) 50% 78% / 2px 1px no-repeat,
    linear-gradient(#fff 50%, #c6c6c6 50%);
}
.canvas { flex: 1; display: flex; flex-direction: column; align-items: center; min-width: 0; overflow: hidden; padding-top: 5px; }
.h-ruler-wrap { position: relative; width: 554px; height: 25px; }
.h-ruler { height: 16px; overflow: hidden; background: linear-gradient(90deg, #c6c6c6 84px, #fff 84px, #fff 470px, #c6c6c6 470px); }
.h-ruler ol { display: grid; grid-auto-flow: column; grid-auto-columns: 1fr; margin: 0 -18px 0 -8px; height: 18px; }
.h-ruler li {
  background:
    linear-gradient(#444, #444) 0 50% / 1px 6px no-repeat,
    linear-gradient(#444, #444) 22% 50% / 1px 2px no-repeat,
    linear-gradient(#444, #444) 78% 50% / 1px 2px no-repeat;
}
.markers { position: absolute; left: 0; top: -3px; }
.page-previous { flex: none; width: 553px; height: 44px; border: 1px solid #c6c6c6; border-top: 0; background: #fff; }
.page { position: relative; flex: 1; display: flex; flex-direction: column; width: 553px; margin-top: 10px; border: 1px solid #c6c6c6; border-bottom: 0; background: #fff; }
.header-zone { flex: none; height: 66px; border-bottom: 1px dashed #777; }
.zone-tag { position: absolute; left: 4px; width: 102px; height: 22px; border: 1px solid #777; background: #e1e1e1; line-height: 20px; text-align: center; white-space: nowrap; }
.header-tag { top: 65px; }
.footer-tag { bottom: 29px; }
.footer-zone { height: 30px; border-top: 1px dashed #777; text-align: center; padding-left: 6px; color: #000; font-size: 8px; font-weight: 700; line-height: 13px; }
.watermark, .overlay, .annotations { position: absolute; left: 0; top: 0; pointer-events: none; }
.watermark text { font-size: 71px; font-weight: 300; fill: #dcdcdc; stroke: #dcdcdc; stroke-width: 1px; }
.text { position: relative; flex: 1; min-height: 0; padding: 9px 78px 0 84px; color: #808080; font-size: 11px; }
.text h1 { margin: 0; font-size: 12px; line-height: 20px; text-align: center; }
.text h2 { margin: 26px 0 16px; font-size: 11px; line-height: 20px; text-align: center; font-weight: 500; }
.text p { margin: 0; }
.text span { display: block; height: 29px; line-height: 29px; white-space: nowrap; text-align: justify; text-align-last: justify; }
.text .first { padding-left: 20px; }
.text .last { text-align-last: left; }
.text .tight { font-feature-settings: "halt"; }
.text em { font-style: normal; color: #ff8080; }
.text b { font-weight: 400; font-size: 10px; }
.text .latin { font-size: 10px; }
.symbols i { display: inline-block; width: 20px; }
.scrollbar { display: flex; flex-direction: column; width: 15px; padding: 2px 0 1px; margin-right: 1px; background: #dadada; }
.scrollbar button { height: 15px; border: 1px solid #ababab; background: #fff; }
.track { flex: 1; display: flex; flex-direction: column; }
.scroll-thumb { height: 99px; margin-top: 193px; border: 1px solid #ababab; background: #fff; }

/* status bar */
.status { display: flex; align-items: center; gap: 21px; height: 22px; padding: 0 26px 2px 7px; border-top: 1px solid #c6c6c6; background: #f1f1f1; white-space: nowrap; }
.views { display: flex; margin-left: auto; }
.views button { width: 38px; height: 21px; }
.views .on { background: #cacaca; }
.zoom { display: flex; align-items: center; gap: 7px; margin-left: -18px; }
.zoom span { margin-left: 5px; }
.zoom input {
  appearance: none;
  width: 102px;
  height: 12px;
  margin: 0;
  background:
    linear-gradient(#999, #999) 50% 50% / 1px 6px no-repeat,
    linear-gradient(#aaa, #aaa) 0 50% / 100% 1px no-repeat;
}
.zoom input::-webkit-slider-thumb { appearance: none; width: 4px; height: 11px; background: #666; }

/* input method bar */
.ime {
  position: absolute;
  left: 780px;
  bottom: 0;
  display: grid;
  grid-template-columns: 29px repeat(8, 24px);
  align-items: center;
  justify-items: center;
  height: 26px;
  border: 1px solid #b5cdea;
  border-bottom: 0;
  background: #fff;
  color: #0a70da;
}
.ime b { font-size: 16px; }
.sogou { margin: -4px 0 0 -8px; }

.annotations { left: -1px; overflow: hidden; }
.stem { fill: none; stroke: #f00; stroke-width: 3px; stroke-linecap: round; }
.brand-cn { font-size: 21px; font-weight: 700; fill: #4a8fd4; }
.brand-url { font: 700 16px "Liberation Sans", sans-serif; fill: #4fbf75; }
```
